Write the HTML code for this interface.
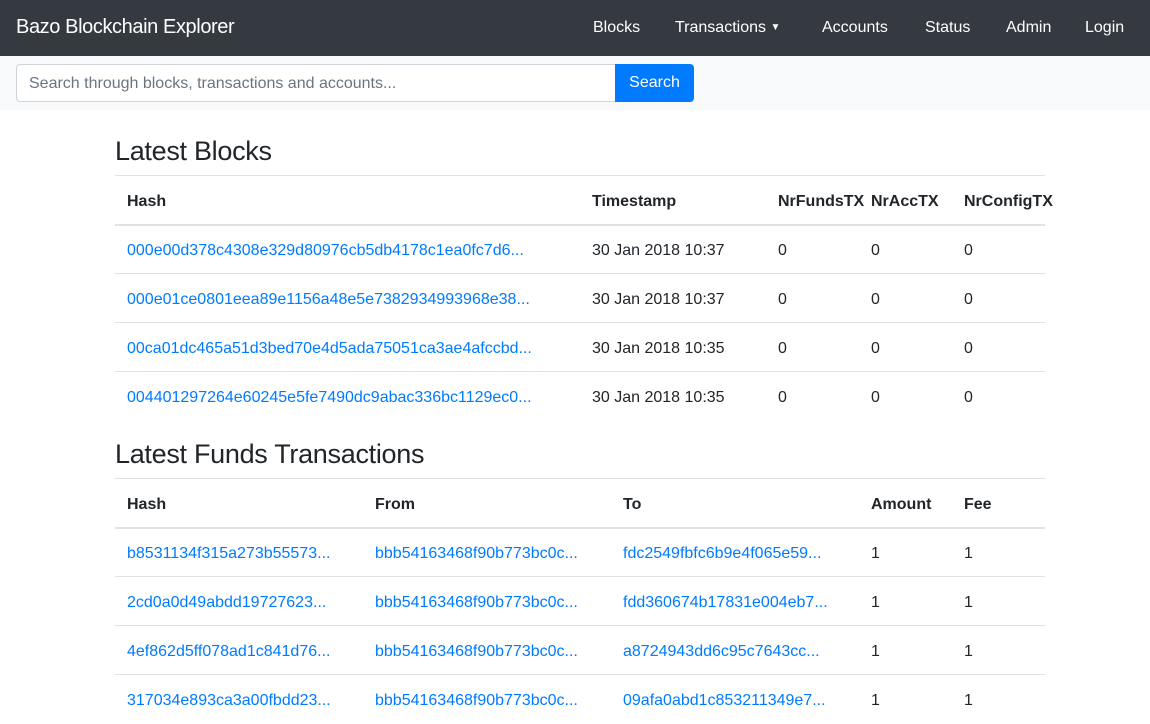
<!DOCTYPE html>
<html><head><meta charset="utf-8"><style>
*{box-sizing:border-box;margin:0;padding:0}
body{width:1150px;height:721px;overflow:hidden;font-family:"Liberation Sans",Arial,sans-serif;color:#212529;background:#fff;font-size:16px}
.nav{height:56px;background:#343a40;position:relative;color:#fff}
.brand{position:absolute;left:16px;top:16px;font-size:20px;letter-spacing:-0.4px}
.nav span{position:absolute;top:19px;font-size:16px}
.sub{height:54px;background:#f8f9fa;position:relative}
.inp{position:absolute;left:16px;top:8px;width:600px;height:38px;border:1px solid #ced4da;border-radius:4px 0 0 4px;background:#fff;color:#6c757d;padding:10px 12px}
.btn{position:absolute;left:615px;top:8px;width:79px;height:38px;background:#007bff;color:#fff;border-radius:0 4px 4px 0;text-align:center;padding-top:10px}
h2{position:absolute;left:115px;font-size:27px;font-weight:normal;letter-spacing:-0.3px}
table{position:absolute;left:115px;width:930px;border-collapse:collapse;table-layout:fixed}
td,th{height:49px;padding:4px 12px 0;text-align:left;border-top:1px solid #dee2e6;white-space:nowrap;overflow:visible}
th{border-bottom:2px solid #dee2e6;font-weight:bold}
a{color:#007bff;text-decoration:none}
</style></head><body>
<div class="nav"><div class="brand">Bazo Blockchain Explorer</div>
<span style="left:593px">Blocks</span><span style="left:675px">Transactions <span style="position:static;font-size:10px;vertical-align:2px">▼</span></span><span style="left:822px">Accounts</span><span style="left:925px">Status</span><span style="left:1006px">Admin</span><span style="left:1085px">Login</span></div>
<div class="sub"><div class="inp">Search through blocks, transactions and accounts...</div><div class="btn">Search</div></div>
<h2 style="top:136px">Latest Blocks</h2>
<table style="top:175px"><colgroup><col style="width:465px"><col style="width:186px"><col style="width:93px"><col style="width:93px"><col style="width:93px"></colgroup>
<tr><th>Hash</th><th>Timestamp</th><th>NrFundsTX</th><th>NrAccTX</th><th>NrConfigTX</th></tr>
<tr><td><a>000e00d378c4308e329d80976cb5db4178c1ea0fc7d6...</a></td><td>30 Jan 2018 10:37</td><td>0</td><td>0</td><td>0</td></tr>
<tr><td><a>000e01ce0801eea89e1156a48e5e7382934993968e38...</a></td><td>30 Jan 2018 10:37</td><td>0</td><td>0</td><td>0</td></tr>
<tr><td><a>00ca01dc465a51d3bed70e4d5ada75051ca3ae4afccbd...</a></td><td>30 Jan 2018 10:35</td><td>0</td><td>0</td><td>0</td></tr>
<tr><td><a>004401297264e60245e5fe7490dc9abac336bc1129ec0...</a></td><td>30 Jan 2018 10:35</td><td>0</td><td>0</td><td>0</td></tr>
</table>
<h2 style="top:439px">Latest Funds Transactions</h2>
<table style="top:478px"><colgroup><col style="width:248px"><col style="width:248px"><col style="width:248px"><col style="width:93px"><col style="width:93px"></colgroup>
<tr><th>Hash</th><th>From</th><th>To</th><th>Amount</th><th>Fee</th></tr>
<tr><td><a>b8531134f315a273b55573...</a></td><td><a>bbb54163468f90b773bc0c...</a></td><td><a>fdc2549fbfc6b9e4f065e59...</a></td><td>1</td><td>1</td></tr>
<tr><td><a>2cd0a0d49abdd19727623...</a></td><td><a>bbb54163468f90b773bc0c...</a></td><td><a>fdd360674b17831e004eb7...</a></td><td>1</td><td>1</td></tr>
<tr><td><a>4ef862d5ff078ad1c841d76...</a></td><td><a>bbb54163468f90b773bc0c...</a></td><td><a>a8724943dd6c95c7643cc...</a></td><td>1</td><td>1</td></tr>
<tr><td><a>317034e893ca3a00fbdd23...</a></td><td><a>bbb54163468f90b773bc0c...</a></td><td><a>09afa0abd1c853211349e7...</a></td><td>1</td><td>1</td></tr>
</table>
</body></html>
